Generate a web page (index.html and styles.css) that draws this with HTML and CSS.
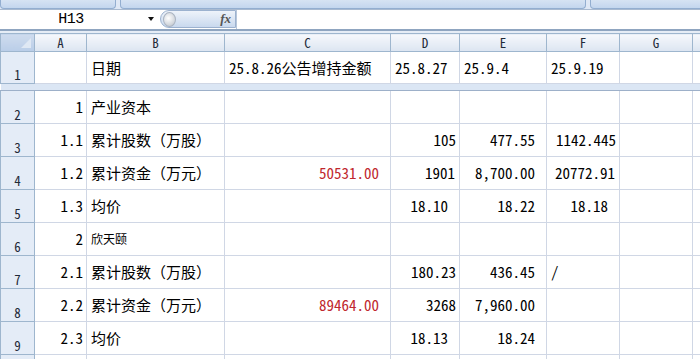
FILE: index.html
```html
<!DOCTYPE html>
<html lang="zh-CN">
<head>
    <meta charset="UTF-8">
    <title>Sheet1</title>
    <link rel="stylesheet" href="styles.css">
</head>
<body>
<div class="topstrip">
    <div class="tab tab1"></div>
    <div class="tab tab2"></div>
    <div class="tab tab3"></div>
</div>
<div class="fbar">
    <div class="namebox"><span class="ref">H13</span><span class="drop"></span></div>
    <div class="fxbtn"><span class="knob"></span><span class="fx">fx</span></div>
    <div class="finput"></div>
</div>
<div class="fbar-line"></div>
<table class="sheet">
    <colgroup>
        <col class="c-hd"><col class="c-a"><col class="c-b"><col class="c-c"><col class="c-d"><col class="c-e"><col class="c-f"><col class="c-g"><col class="c-h">
    </colgroup>
    <tr class="colhead">
        <th class="corner"><span class="tri"></span></th>
        <th>A</th><th>B</th><th>C</th><th>D</th><th>E</th><th>F</th><th>G</th><th></th>
    </tr>
    <tr class="first">
        <th class="rh">1</th>
        <td></td><td>日期</td><td>25.8.26公告增持金额</td><td>25.8.27</td><td>25.9.4</td><td>25.9.19</td><td></td><td></td>
    </tr>
    <tr class="freeze">
        <th></th><td colspan="8"></td>
    </tr>
    <tr>
        <th class="rh">2</th>
        <td class="r pr3">1</td><td>产业资本</td><td></td><td></td><td></td><td></td><td></td><td></td>
    </tr>
    <tr>
        <th class="rh">3</th>
        <td class="r pr3">1.1</td><td>累计股数（万股）</td><td></td><td class="r pr3">105</td><td class="r pr11">477.55</td><td class="r pr3">1142.445</td><td></td><td></td>
    </tr>
    <tr>
        <th class="rh">4</th>
        <td class="r pr3">1.2</td><td>累计资金（万元）</td><td class="r pr11 red">50531.00</td><td class="r pr4">1901</td><td class="r pr11">8,700.00</td><td class="r pr4">20772.91</td><td></td><td></td>
    </tr>
    <tr>
        <th class="rh">5</th>
        <td class="r pr3">1.3</td><td>均价</td><td></td><td class="r pr11">18.10</td><td class="r pr11">18.22</td><td class="r pr11">18.18</td><td></td><td></td>
    </tr>
    <tr>
        <th class="rh">6</th>
        <td class="r pr3">2</td><td class="small">欣天颐</td><td></td><td></td><td></td><td></td><td></td><td></td>
    </tr>
    <tr>
        <th class="rh">7</th>
        <td class="r pr3">2.1</td><td>累计股数（万股）</td><td></td><td class="r pr3">180.23</td><td class="r pr11">436.45</td><td>/</td><td></td><td></td>
    </tr>
    <tr>
        <th class="rh">8</th>
        <td class="r pr3">2.2</td><td>累计资金（万元）</td><td class="r pr11 red">89464.00</td><td class="r pr3">3268</td><td class="r pr11">7,960.00</td><td></td><td></td><td></td>
    </tr>
    <tr>
        <th class="rh">9</th>
        <td class="r pr3">2.3</td><td>均价</td><td></td><td class="r pr11">18.13</td><td class="r pr11">18.24</td><td></td><td></td><td></td>
    </tr>
    <tr>
        <th class="rh"></th>
        <td></td><td></td><td></td><td></td><td></td><td></td><td></td><td></td>
    </tr>
</table>
</body>
</html>
```

FILE: styles.css
```css
html, body{
    margin: 0;
    padding: 0;
    overflow: hidden;
    background: #fff;
}
body{
    width: 700px;
    height: 359px;
    font-family: "Noto Sans Mono CJK SC", "Liberation Mono", "Noto Sans CJK SC", monospace;
    color: #000;
}

/* top ribbon edge */
.topstrip{
    height: 10px;
    display: flex;
    gap: 4px;
    background: #dfe8f5;
    border-bottom: 1px solid #a9bad0;
    box-sizing: border-box;
}
.tab{
    height: 8px;
    background: linear-gradient(#d6e3f3, #c3d6ee);
    border: 1px solid #93aed0;
    border-top: none;
    border-radius: 0 0 4px 4px;
}
.tab1{ width: 114px; }
.tab2{ width: 464px; }
.tab3{ flex: 1; margin-right: -4px; }

/* formula bar */
.fbar{
    height: 19px;
    display: flex;
    background: #fff;
}
.namebox{
    width: 160px;
    position: relative;
    font-family: "Liberation Mono", monospace;
    font-size: 15px;
    line-height: 19px;
}
.ref{
    display: block;
    text-align: center;
    width: 142px;
    letter-spacing: -0.5px;
}
.drop{
    position: absolute;
    left: 148px;
    top: 7px;
    border-left: 3px solid transparent;
    border-right: 3px solid transparent;
    border-top: 4px solid #111;
}
.fxbtn{
    width: 76px;
    height: 18px;
    display: flex;
    align-items: center;
    justify-content: space-between;
    box-sizing: border-box;
    background: linear-gradient(#eef3fa, #c9d9ee);
    border: 1px solid #9cb2cf;
    border-radius: 9px 0 0 9px;
    padding: 0 4px 0 2px;
}
.knob{
    width: 11px;
    height: 13px;
    border-radius: 50%;
    background: radial-gradient(circle at 40% 40%, #fff, #b9c0c9);
    border: 1px solid #aab4c2;
}
.fx{
    font-family: "Liberation Serif", serif;
    font-style: italic;
    font-weight: bold;
    font-size: 13px;
    color: #555;
}
.finput{
    flex: 1;
    border-left: 1px solid #b7c6da;
}
.fbar-line{
    height: 2px;
    border-top: 2px solid #8fa5c0;
    background: #e6edf6;
}

/* sheet grid */
.sheet{
    border-collapse: collapse;
    table-layout: fixed;
    width: 710px;
    font-size: 15px;
}
.c-hd{ width: 34px; }
.c-a{ width: 52px; }
.c-b{ width: 138px; }
.c-c{ width: 166px; }
.c-d{ width: 69px; }
.c-e{ width: 87px; }
.c-f{ width: 73px; }
.c-g{ width: 73px; }
.c-h{ width: 18px; }

.sheet td{
    height: 33px;
    padding: 0 3px 0 4px;
    line-height: 20px;
    border: 1px solid #d0d7e5;
    white-space: nowrap;
    overflow: hidden;
    box-sizing: border-box;
}
.sheet .first td{
    height: 32px;
}
.sheet th{
    font-weight: normal;
    padding: 0;
    border: 1px solid #9eb6ce;
    color: #1f2a38;
}
.colhead th{
    height: 17px;
    font-size: 13px;
    line-height: 16px;
    background: linear-gradient(#f6f8fc, #dce5f1);
}
.colhead .corner{
    position: relative;
    background: linear-gradient(#cfdcee, #b9cde8);
}
.tri{
    position: absolute;
    right: 3px;
    bottom: 3px;
    border-left: 10px solid transparent;
    border-bottom: 10px solid #dfe8f4;
}
.rh{
    background: #e4ecf7;
    vertical-align: bottom;
    font-size: 13px;
    line-height: 16px;
}
.freeze th,
.freeze td{
    height: 6px;
    padding: 0;
    border: none;
    border-top: 1px solid #c3cfdf;
    border-bottom: 1px solid #9db0c9;
    background: #dbe6f4;
}

.r{ text-align: right; }
.pr3{ padding-right: 3px !important; }
.pr4{ padding-right: 4px !important; }
.pr11{ padding-right: 11px !important; }
.red{ color: #c0282e; }
.small{ font-size: 12px; }
```
